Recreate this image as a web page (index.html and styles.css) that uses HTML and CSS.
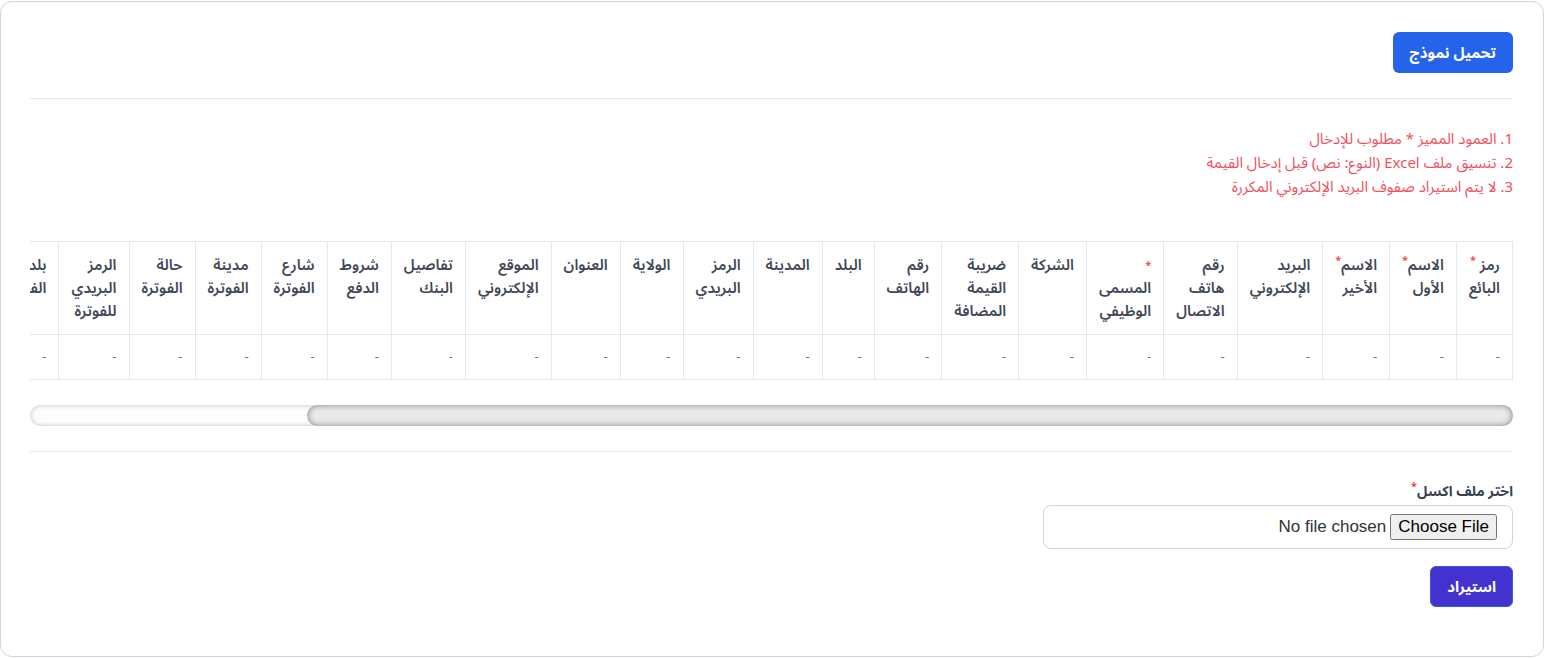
FILE: index.html
```html
<!DOCTYPE html>
<html lang="ar" dir="rtl">
<head>
  <meta charset="UTF-8">
  <title>استيراد البائعين</title>
  <link rel="stylesheet" href="styles.css">
</head>
<body>

<div class="card">
  <div class="top-bar">
    <button class="btn btn-blue">تحميل نموذج</button>
  </div>

  <hr class="sep">

  <div class="notes">
    <p>1. العمود المميز * مطلوب للإدخال</p>
    <p>2. تنسيق ملف Excel (النوع: نص) قبل إدخال القيمة</p>
    <p>3. لا يتم استيراد صفوف البريد الإلكتروني المكررة</p>
  </div>

  <div class="table-wrap">
    <table class="sample">
      <thead>
        <tr>
          <th>رمز <span class="req">*</span> البائع</th>
          <th>الاسم<span class="req">*</span> الأول</th>
          <th>الاسم<span class="req">*</span> الأخير</th>
          <th>البريد الإلكتروني</th>
          <th>رقم هاتف الاتصال</th>
          <th><span class="req req-line">*</span>المسمى الوظيفي</th>
          <th>الشركة</th>
          <th>ضريبة القيمة المضافة</th>
          <th>رقم الهاتف</th>
          <th>البلد</th>
          <th>المدينة</th>
          <th>الرمز البريدي</th>
          <th>الولاية</th>
          <th>العنوان</th>
          <th>الموقع الإلكتروني</th>
          <th>تفاصيل البنك</th>
          <th>شروط الدفع</th>
          <th>شارع الفوترة</th>
          <th>مدينة الفوترة</th>
          <th>حالة الفوترة</th>
          <th>الرمز البريدي للفوترة</th>
          <th>بلد الفوترة</th>
          <th>شارع الشحن</th>
          <th>مدينة الشحن</th>
          <th>حالة الشحن</th>
          <th>الرمز البريدي للشحن</th>
          <th>بلد الشحن</th>
        </tr>
      </thead>
      <tbody>
        <tr>
          <td>-</td><td>-</td><td>-</td><td>-</td><td>-</td><td>-</td><td>-</td>
          <td>-</td><td>-</td><td>-</td><td>-</td><td>-</td><td>-</td><td>-</td>
          <td>-</td><td>-</td><td>-</td><td>-</td><td>-</td><td>-</td><td>-</td>
          <td>-</td><td>-</td><td>-</td><td>-</td><td>-</td><td>-</td>
        </tr>
      </tbody>
    </table>
  </div>
  <div class="scroll-track"><div class="scroll-thumb"></div></div>

  <hr class="sep">

  <form class="import-form" onsubmit="return false">
    <label class="field-label" for="excel">اختر ملف اكسل<span class="req">*</span></label>
    <div class="file-box">
      <input type="file" id="excel" accept=".xlsx,.xls">
    </div>
    <button class="btn btn-indigo" type="submit">استيراد</button>
  </form>
</div>

</body>
</html>
```

FILE: styles.css
```css
html, body {
  margin: 0;
  background: #fff;
}
body {
  font-family: "Noto Sans Arabic", "Noto Kufi Arabic", "DejaVu Sans", sans-serif;
  color: #374151;
}
.card {
  margin: 1px 1px 0 0;
  height: 656px;
  box-sizing: border-box;
  border: 1px solid #d4d4d8;
  border-radius: 12px;
  padding: 30px 30px 30px 29px;
  background: #fff;
}
.top-bar {
  display: flex;
  justify-content: flex-start;
}
.btn {
  font-family: inherit;
  font-size: 15px;
  font-weight: bold;
  color: #fff;
  border: 1px solid transparent;
  border-radius: 6px;
  height: 41px;
  padding: 0 16px;
  cursor: pointer;
}
.btn-blue {
  background: #2563eb;
}
.btn-indigo {
  background: #4332cf;
  border-color: #3b5bdb;
}
.sep {
  border: 0;
  border-top: 1px solid #e5e7eb;
  margin: 25px 0 0;
}
.notes {
  margin-top: 28px;
  color: #f0505e;
  font-size: 15px;
  line-height: 24px;
}
.notes p {
  margin: 0;
}
.table-wrap {
  margin-top: 42px;
  overflow-x: auto;
  scrollbar-width: none;
}
.sample {
  width: 100%;
  border-collapse: collapse;
}
.sample th,
.sample td {
  border: 1px solid #e2e8f0;
  padding: 12px;
  text-align: right;
  vertical-align: top;
}
.sample th {
  padding-bottom: 11px;
  font-size: 15px;
  font-weight: 600;
  line-height: 23px;
  color: #3f4856;
}
.sample td {
  font-size: 13px;
  line-height: 20px;
  color: #6b7280;
}
.req {
  color: #ef4444;
  font-size: 11px;
  vertical-align: super;
  line-height: 0;
}
.req-line {
  display: block;
  line-height: 23px;
  vertical-align: baseline;
}
/* scrollbar of the table, drawn with the rounded track */
.scroll-track {
  display: flex;
  margin-top: 25px;
  height: 21px;
  border-radius: 11px;
  background: #fdfdfd;
  box-shadow: inset 0 0 5px rgba(0, 0, 0, 0.25);
}
.scroll-thumb {
  width: 81.3%;
  border-radius: 11px;
  background: #e9e9e9;
  box-shadow: inset 0 0 6px rgba(0, 0, 0, 0.45);
}
.import-form {
  display: flex;
  flex-direction: column;
  align-items: flex-start;
  margin-top: 30px;
}
.field-label {
  font-size: 14px;
  font-weight: bold;
  line-height: 20px;
  color: #374151;
  margin-bottom: 3px;
}
.file-box {
  width: 470px;
  box-sizing: border-box;
  border: 1px solid #d1d5db;
  border-radius: 8px;
  padding: 8px 15px;
}
.file-box input {
  display: block;
  width: 100%;
  font-family: "Liberation Sans", Arial, sans-serif;
  font-size: 17px;
  color: #333;
}
.import-form .btn {
  margin-top: 17px;
}
```
